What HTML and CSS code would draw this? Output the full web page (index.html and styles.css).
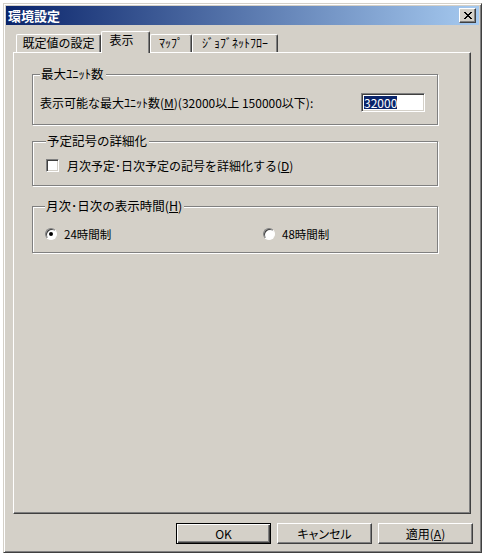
FILE: index.html
```html
<!DOCTYPE html>
<html lang="ja">

<head>
  <meta charset="UTF-8" />
  <meta name="viewport" content="width=device-width, initial-scale=1.0" />
  <title>環境設定</title>
  <link rel="stylesheet" href="styles.css">
</head>

<body>
  <div class="dialog">
    <div class="titlebar">
      <span class="title">環境設定</span>
      <button class="close-btn" aria-label="閉じる">
        <svg width="8" height="7" viewBox="0 0 8 7" shape-rendering="crispEdges">
          <path fill="#000" d="M0 0h2v1H0zM6 0h2v1H6zM1 1h2v1H1zM5 1h2v1H5zM2 2h4v1H2zM3 3h2v1H3zM2 4h4v1H2zM1 5h2v1H1zM5 5h2v1H5zM0 6h2v1H0zM6 6h2v1H6z" />
        </svg>
      </button>
    </div>

    <div class="dialog-body">
      <div class="tabs">
        <div class="tab tab-default">既定値の設定</div>
        <div class="tab tab-active">表示</div>
        <div class="tab tab-map">ﾏｯﾌﾟ</div>
        <div class="tab tab-flow">ｼﾞｮﾌﾞﾈｯﾄﾌﾛｰ</div>
      </div>

      <div class="panel">
        <fieldset class="group group-unit">
          <legend>最大ﾕﾆｯﾄ数</legend>
          <div class="row">
            <span class="field-label">表示可能な最大ﾕﾆｯﾄ数(<u>M</u>)(32000以上 150000以下):</span>
            <span class="textbox"><span class="selected">32000</span></span>
          </div>
        </fieldset>

        <fieldset class="group group-symbol">
          <legend>予定記号の詳細化</legend>
          <div class="row">
            <span class="checkbox"></span>
            <span class="option-text">月次予定･日次予定の記号を詳細化する(<u>D</u>)</span>
          </div>
        </fieldset>

        <fieldset class="group group-hours">
          <legend>月次･日次の表示時間(<u>H</u>)</legend>
          <div class="row">
            <div class="radio-item radio-first">
              <span class="radio checked"><span class="dot"></span></span>
              <span class="option-text small">24時間制</span>
            </div>
            <div class="radio-item">
              <span class="radio"></span>
              <span class="option-text small">48時間制</span>
            </div>
          </div>
        </fieldset>
      </div>

      <div class="buttons">
        <button class="btn btn-default">OK</button>
        <button class="btn btn-kana">キャンセル</button>
        <button class="btn">適用(<u>A</u>)</button>
      </div>
    </div>
  </div>
</body>

</html>
```

FILE: styles.css
```css
body {
  margin: 0;
  background-color: #ffffff;
  font-family: "Noto Sans CJK JP", "Noto Sans", sans-serif;
  font-size: 12px;
  color: #000000;
}

.dialog {
  margin: 3px;
  width: 479px;
  height: 550px;
  box-sizing: border-box;
  padding: 2px;
  background-color: #d4d0c8;
  border: 1px solid;
  border-color: #d4d0c8 #404040 #404040 #d4d0c8;
  box-shadow: inset 1px 1px #ffffff, inset -1px -1px #808080;
  display: flex;
  flex-direction: column;
}

/* title bar */
.titlebar {
  height: 19px;
  flex-shrink: 0;
  display: flex;
  align-items: center;
  justify-content: space-between;
  padding: 0 3px 0 2px;
  background: linear-gradient(to right, #0a246a, #a6caf0);
}

.title {
  color: #ffffff;
  font-weight: bold;
  font-size: 13px;
  line-height: 19px;
}

.close-btn {
  width: 17px;
  height: 15px;
  box-sizing: border-box;
  padding: 0;
  display: flex;
  align-items: center;
  justify-content: center;
  background-color: #d4d0c8;
  border: 1px solid;
  border-color: #ffffff #404040 #404040 #ffffff;
  box-shadow: inset -1px -1px #808080;
}

.dialog-body {
  flex: 1;
  padding: 6px 6px 0 7px;
  display: flex;
  flex-direction: column;
}

/* tabs */
.tabs {
  height: 21px;
  display: flex;
  align-items: flex-end;
  padding-left: 3px;
}

.tab {
  box-sizing: border-box;
  height: 18px;
  line-height: 16px;
  text-align: center;
  border-top: 1px solid #ffffff;
  border-left: 1px solid #ffffff;
  border-right: 1px solid #404040;
  border-top-left-radius: 2px;
  border-top-right-radius: 2px;
  box-shadow: inset -1px 0 #808080;
  background-color: #d4d0c8;
}

.tab-default {
  width: 85px;
}

.tab-active {
  position: relative;
  z-index: 1;
  width: 49px;
  height: 22px;
  margin-bottom: -1px;
  line-height: 15px;
  padding-right: 8px;
}

.tab-map {
  width: 42px;
}

.tab-flow {
  width: 86px;
}

/* page */
.panel {
  width: 458px;
  height: 462px;
  box-sizing: border-box;
  padding: 14px 32px 0 18px;
  border: 1px solid;
  border-color: #ffffff #404040 #404040 #ffffff;
  box-shadow: inset -1px -1px #808080;
  display: flex;
  flex-direction: column;
}

.group {
  margin: 0;
  min-width: 0;
  border: 1px solid #808080;
  box-shadow: inset 1px 1px #ffffff, 1px 1px #ffffff;
}

.group legend {
  padding: 0 2px 0 1px;
  margin-left: 0;
  line-height: 14px;
  font-size: 12.5px;
  background-color: #d4d0c8;
}

.group-unit {
  padding: 12px 12px 12px 7px;
}

.group-symbol {
  margin-top: 9px;
  padding: 9px 12px 12px 13px;
}

.group-hours {
  margin-top: 13px;
  padding: 13px 12px 10px 12px;
}

.row {
  display: flex;
  align-items: center;
  height: 16px;
}

.group-unit .row {
  height: 19px;
}

.textbox {
  margin-left: auto;
  width: 64px;
  height: 19px;
  box-sizing: border-box;
  padding: 2px 2px 0 2px;
  background-color: #ffffff;
  border: 1px solid;
  border-color: #808080 #ffffff #ffffff #808080;
  box-shadow: inset 1px 1px #404040, inset -1px -1px #d4d0c8;
  line-height: 13px;
}

.selected {
  display: inline-block;
  background-color: #0a246a;
  color: #ffffff;
}

.checkbox {
  width: 13px;
  height: 13px;
  box-sizing: border-box;
  background-color: #ffffff;
  border: 1px solid;
  border-color: #808080 #ffffff #ffffff #808080;
  box-shadow: inset 1px 1px #404040, inset -1px -1px #d4d0c8;
  margin-right: 8px;
}

.radio-item {
  display: flex;
  align-items: center;
}

.radio-first {
  width: 218px;
}

.radio {
  width: 12px;
  height: 12px;
  box-sizing: border-box;
  border-radius: 50%;
  background-color: #ffffff;
  border: 1px solid;
  border-color: #808080 #ffffff #ffffff #808080;
  box-shadow: inset 1px 1px #404040;
  margin-right: 7px;
  display: flex;
  align-items: center;
  justify-content: center;
}

.dot {
  width: 4px;
  height: 4px;
  border-radius: 50%;
  background-color: #000000;
}

.option-text.small {
  font-size: 11.5px;
}

/* buttons */
.buttons {
  margin-top: 9px;
  display: flex;
  justify-content: flex-end;
  gap: 6px;
}

.btn {
  width: 95px;
  height: 21px;
  box-sizing: border-box;
  padding: 0;
  font-family: inherit;
  font-size: 12px;
  color: #000000;
  background-color: #d4d0c8;
  border: 1px solid;
  border-color: #ffffff #404040 #404040 #ffffff;
  box-shadow: inset -1px -1px #808080;
}

.btn-kana {
  font-feature-settings: "palt";
}

.btn-default {
  border-color: #000000;
  box-shadow: inset 1px 1px #ffffff, inset -1px -1px #404040, inset -2px -2px #808080;
}
```
